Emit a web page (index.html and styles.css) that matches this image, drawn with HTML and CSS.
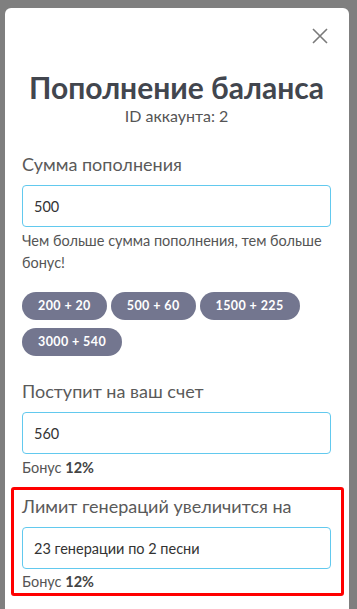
FILE: index.html
```html
<!DOCTYPE html>
<html lang="ru">
<head>
<meta charset="utf-8">
<title>Пополнение баланса</title>
<link rel="stylesheet" href="styles.css">
</head>
<body>
<div class="modal">
  <div class="modal-head">
    <button class="close" aria-label="Закрыть">
      <svg width="16" height="16" viewBox="0 0 16 16"><path d="M1 1L15 15M15 1L1 15" stroke="#7a7a7a" stroke-width="1.6" fill="none"/></svg>
    </button>
  </div>
  <h1 class="title">Пополнение баланса</h1>
  <div class="subtitle">ID аккаунта: 2</div>

  <div class="group first">
    <label class="label">Сумма пополнения</label>
    <div class="input">500</div>
    <div class="hint">Чем больше сумма пополнения, тем больше бонус!</div>
    <div class="pills">
      <span class="pill">200 + 20</span>
      <span class="pill">500 + 60</span>
      <span class="pill">1500 + 225</span>
      <span class="pill">3000 + 540</span>
    </div>
  </div>

  <div class="group">
    <label class="label">Поступит на ваш счет</label>
    <div class="input">560</div>
    <div class="hint">Бонус <b>12%</b></div>
  </div>

  <div class="group highlight">
    <label class="label">Лимит генераций увеличится на</label>
    <div class="input">23 генерации по 2 песни</div>
    <div class="hint">Бонус <b>12%</b></div>
  </div>
</div>
</body>
</html>
```
FILE: styles.css
```css
html, body {
  margin: 0;
  padding: 0;
  height: 100%;
  overflow: hidden;
}
body {
  background: #7f7f7f;
  font-family: "Lato", "Open Sans", sans-serif;
  color: #555;
}
.modal {
  margin: 8px 8px 0 5px;
  background: #fff;
  border-radius: 6px 6px 0 0;
  padding: 20px 18px 0 17px;
  height: 640px;
  box-sizing: border-box;
}
.modal-head {
  display: flex;
  justify-content: flex-end;
  padding-right: 3px;
}
.close {
  border: 0;
  background: none;
  padding: 0;
  width: 16px;
  height: 16px;
  display: block;
}
.close svg { display: block; }
.title {
  margin: 25px 0 0;
  text-align: center;
  font-size: 30px;
  line-height: 36px;
  font-weight: 700;
  color: #42464e;
}
.subtitle {
  margin-top: 1px;
  text-align: center;
  font-size: 16px;
  line-height: 20px;
  color: #555;
}
.group {
  margin-top: 23px;
}
.group.first {
  margin-top: 26px;
}
.label {
  display: block;
  font-size: 18px;
  line-height: 24px;
  color: #5a5a5a;
  margin-bottom: 9px;
}
.input {
  height: 42px;
  box-sizing: border-box;
  border: 1px solid #62c9ee;
  border-radius: 4px;
  padding: 0 11px;
  display: flex;
  align-items: center;
  font-size: 14.5px;
  color: #333;
}
.hint {
  font-size: 14.5px;
  line-height: 22px;
  margin-top: 3px;
  color: #555;
}
.hint b { color: #444; }
.pills {
  display: flex;
  flex-wrap: wrap;
  gap: 8px 4px;
  margin-top: 18px;
}
.pill {
  height: 28px;
  line-height: 28px;
  padding: 0 16px;
  border-radius: 14px;
  background: #73768f;
  color: #fff;
  font-size: 12.5px;
  font-weight: 700;
  letter-spacing: 0.4px;
}
.highlight {
  margin: 8px -13px 0 -11px;
  padding: 4px 10px 0 8px;
  border: 3px solid #ff0000;
  border-radius: 3px;
}
.highlight .hint {
  margin-top: 2px;
}
```
